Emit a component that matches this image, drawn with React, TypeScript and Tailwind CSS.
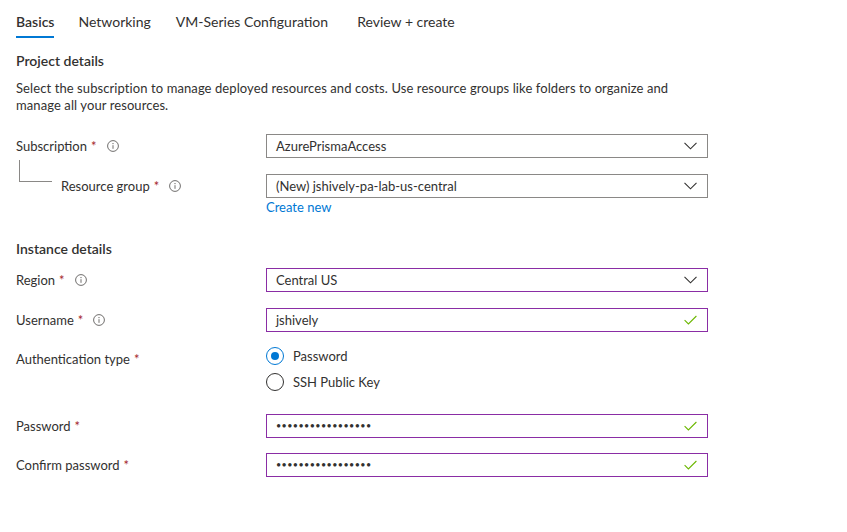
import { useState } from "react";

const InfoIcon = () => (
  <svg width="12" height="12" viewBox="0 0 12 12" className="ml-[10px] shrink-0">
    <circle cx="6" cy="6" r="5.4" fill="none" stroke="#605e5c" strokeWidth="0.9" />
    <circle cx="6" cy="3.6" r="0.65" fill="#605e5c" />
    <path d="M6 5.2v3.6" stroke="#605e5c" strokeWidth="0.9" />
  </svg>
);

const Chevron = () => (
  <svg width="13" height="8" viewBox="0 0 13 8" className="shrink-0">
    <path d="M0.5 0.8 6.5 6.8 12.5 0.8" fill="none" stroke="#323130" strokeWidth="1.1" />
  </svg>
);

const Check = () => (
  <svg width="13" height="10" viewBox="0 0 13 10" className="shrink-0">
    <path d="M0.6 5.2 4.4 9 12.4 1" fill="none" stroke="#6bb700" strokeWidth="1.1" />
  </svg>
);

const Req = () => <span className="text-[#a4262c] ml-[4px]">*</span>;

const Label = ({ text, info }: { text: string; info?: boolean }) => (
  <div className="flex items-center">
    <span>{text}</span>
    <Req />
    {info && <InfoIcon />}
  </div>
);

const Field = ({
  value,
  valid,
  kind,
}: {
  value: string;
  valid?: boolean;
  kind: "select" | "text" | "password";
}) => (
  <div
    className={`flex h-[24px] w-[442px] items-center justify-between border pl-[9px] pr-[10px] ${
      valid ? "border-[#8a2da5]" : "border-[#8a8886]"
    }`}
  >
    {kind === "password" ? (
      <span className="text-[9px] tracking-[0.4px] text-[#323130]">{value}</span>
    ) : (
      <span>{value}</span>
    )}
    {kind === "select" ? <Chevron /> : <Check />}
  </div>
);

const Radio = ({ label, checked }: { label: string; checked?: boolean }) => (
  <div className="flex h-[20px] items-center">
    <span
      className={`flex h-[18px] w-[18px] items-center justify-center rounded-full border ${
        checked ? "border-[#0078d4]" : "border-[#323130]"
      }`}
    >
      {checked && <span className="h-[8px] w-[8px] rounded-full bg-[#0078d4]" />}
    </span>
    <span className="ml-[9px]">{label}</span>
  </div>
);

export default function App() {
  const [tab] = useState("Basics");
  const tabs = [
    { name: "Basics", gap: "" },
    { name: "Networking", gap: "ml-[24px]" },
    { name: "VM-Series Configuration", gap: "ml-[25px]" },
    { name: "Review + create", gap: "ml-[29px]" },
  ];
  const dots = "•".repeat(17);

  return (
    <div className="min-h-screen bg-white px-4 text-[13px] leading-[20px] text-[#323130] [font-family:Lato,'Open_Sans',sans-serif]">
      {/* Tabs */}
      <div className="flex">
        {tabs.map((t) => (
          <div
            key={t.name}
            className={`${t.gap} pt-[12px] pb-[4px] text-[14px] border-b-2 ${
              t.name === tab ? "border-[#0078d4] font-semibold" : "border-transparent"
            }`}
          >
            {t.name}
          </div>
        ))}
      </div>

      <h2 className="mt-[13px] text-[14px] font-semibold">Project details</h2>
      <p className="mt-[9px] max-w-[680px] leading-[17px] tracking-[0.09px]">
        Select the subscription to manage deployed resources and costs. Use resource groups like folders to organize and
        manage all your resources.
      </p>

      <div className="mt-[20px] flex items-center">
        <div className="w-[250px]">
          <Label text="Subscription" info />
        </div>
        <Field value="AzurePrismaAccess" kind="select" />
      </div>

      <div className="mt-[16px] flex items-start">
        <div className="relative flex h-[24px] w-[250px] items-center pl-[45px]">
          <span className="absolute left-[3px] top-[-14px] h-[22px] w-[33px] border-b border-l border-[#8a8886]" />
          <Label text="Resource group" info />
        </div>
        <div>
          <Field value="(New) jshively-pa-lab-us-central" kind="select" />
          <div className="leading-[18px] text-[#0078d4]">Create new</div>
        </div>
      </div>

      <h2 className="mt-[23px] text-[14px] font-semibold">Instance details</h2>

      <div className="mt-[9px] flex items-center">
        <div className="w-[250px]">
          <Label text="Region" info />
        </div>
        <Field value="Central US" valid kind="select" />
      </div>

      <div className="mt-[16px] flex items-center">
        <div className="w-[250px]">
          <Label text="Username" info />
        </div>
        <Field value="jshively" valid kind="text" />
      </div>

      <div className="mt-[14px] flex items-start">
        <div className="w-[250px] pt-[3px]">
          <Label text="Authentication type" />
        </div>
        <div className="flex flex-col gap-[6px]">
          <Radio label="Password" checked />
          <Radio label="SSH Public Key" />
        </div>
      </div>

      <div className="mt-[22px] flex items-center">
        <div className="w-[250px]">
          <Label text="Password" />
        </div>
        <Field value={dots} valid kind="password" />
      </div>

      <div className="mt-[15px] flex items-center">
        <div className="w-[250px]">
          <Label text="Confirm password" />
        </div>
        <Field value={dots} valid kind="password" />
      </div>
    </div>
  );
}
